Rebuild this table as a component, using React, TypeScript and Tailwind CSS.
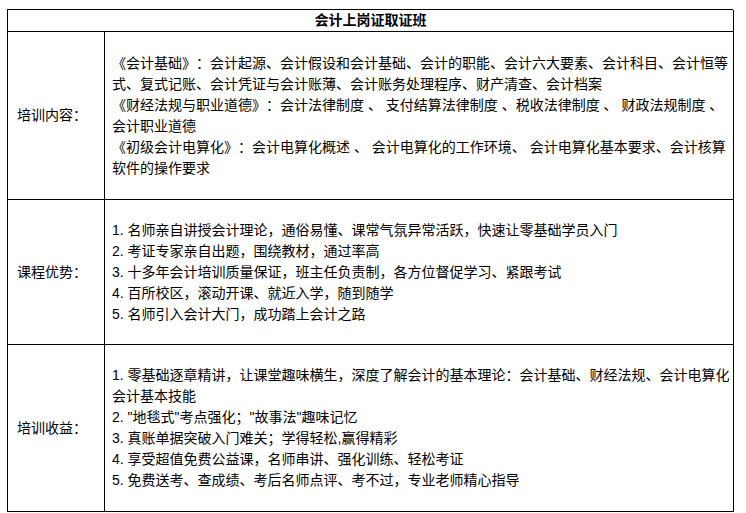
const sections = [
    {
        label: '培训内容：',
        height: 'h-[168px]',
        lines: [
            '《会计基础》：会计起源、会计假设和会计基础、会计的职能、会计六大要素、会计科目、会计恒等',
            '式、复式记账、会计凭证与会计账薄、会计账务处理程序、财产清查、会计档案',
            '《财经法规与职业道德》：会计法律制度 、 支付结算法律制度 、税收法律制度 、 财政法规制度 、',
            '会计职业道德',
            '《初级会计电算化》：会计电算化概述 、 会计电算化的工作环境、 会计电算化基本要求、会计核算',
            '软件的操作要求',
        ],
    },
    {
        label: '课程优势：',
        height: 'h-[145px]',
        lines: [
            '1. 名师亲自讲授会计理论，通俗易懂、课常气氛异常活跃，快速让零基础学员入门',
            '2. 考证专家亲自出题，围绕教材，通过率高',
            '3. 十多年会计培训质量保证，班主任负责制，各方位督促学习、紧跟考试',
            '4. 百所校区，滚动开课、就近入学，随到随学',
            '5. 名师引入会计大门，成功踏上会计之路',
        ],
    },
    {
        label: '培训收益：',
        height: 'h-[167px]',
        lines: [
            '1. 零基础逐章精讲，让课堂趣味横生，深度了解会计的基本理论：会计基础、财经法规、会计电算化',
            '会计基本技能',
            '2. "地毯式"考点强化；"故事法"趣味记忆',
            '3. 真账单据突破入门难关；学得轻松,赢得精彩',
            '4. 享受超值免费公益课，名师串讲、强化训练、轻松考证',
            '5. 免费送考、查成绩、考后名师点评、考不过，专业老师精心指导',
        ],
    },
];

export default function App() {
    return (
        <div className="min-h-[513px] w-[746px] bg-white pl-[7px] pt-[9px] font-['Liberation_Sans','Noto_Sans_CJK_SC',sans-serif] text-[14px] leading-[21px] text-black [text-spacing-trim:space-all]">
            <div className="grid w-[726px] grid-cols-[97px_629px] border-l border-t border-black">
                <div className="col-span-2 flex h-[22px] items-center justify-center border-b border-r border-black font-bold">
                    会计上岗证取证班
                </div>
                {sections.map((section) => (
                    <div key={section.label} className="contents">
                        <div
                            className={`flex items-center border-b border-r border-black pl-[9px] ${section.height}`}
                        >
                            {section.label}
                        </div>
                        <div
                            className={`flex flex-col justify-center border-b border-r border-black pl-[7px] ${section.height}`}
                        >
                            {section.lines.map((line, i) => (
                                <div key={i} className="whitespace-pre">
                                    {line}
                                </div>
                            ))}
                        </div>
                    </div>
                ))}
            </div>
        </div>
    );
}
